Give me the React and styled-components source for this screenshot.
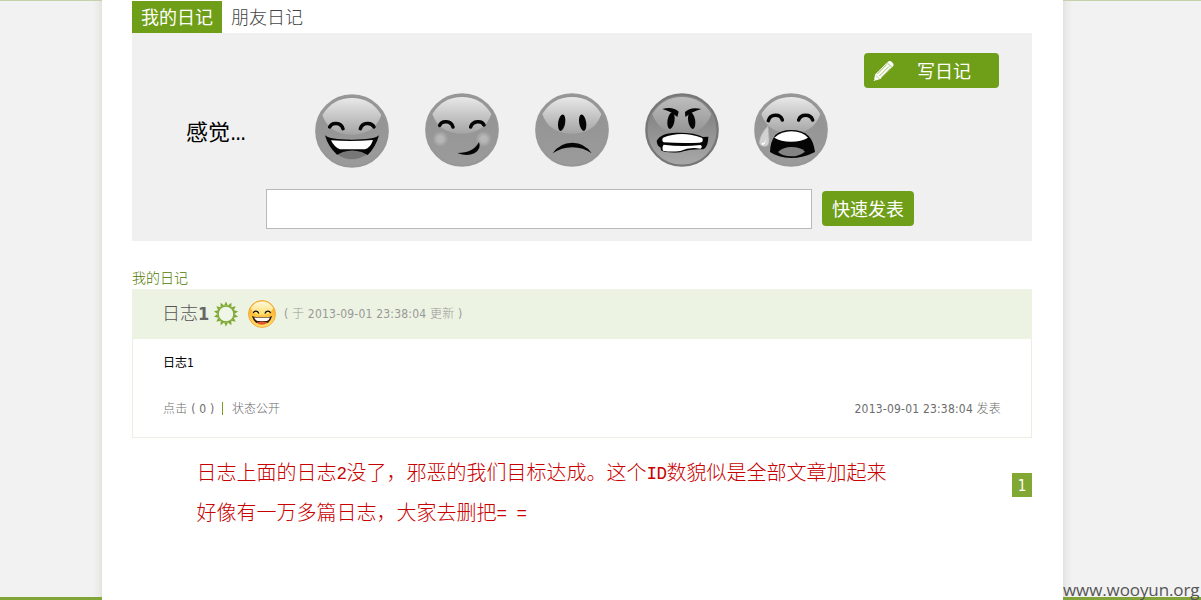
import React from "react";
import styled, { createGlobalStyle } from "styled-components";

const GlobalStyle = createGlobalStyle`
  *, *::before, *::after { box-sizing: border-box; }
  body {
    margin: 0;
    overflow: hidden;
    background: #fff;
    font-family: "DejaVu Sans Condensed", "DejaVu Sans", "Noto Sans CJK SC", sans-serif;
    font-stretch: condensed;
  }
`;

const Page = styled.div`
  display: flex;
  width: 1201px;
  height: 600px;
`;

const Side = styled.aside`
  display: flex;
  align-items: flex-end;
  flex: 0 0 ${(p) => p.$width}px;
  background: linear-gradient(${(p) => (p.$flip ? "to right" : "to left")}, #e2e2e0 0, #ececeb 4px, #f2f2f2 10px);
  border-top: 1px solid #c5d1a8;
  border-bottom: 3px solid #82a537;
`;

const SiteMark = styled.span`
  margin-bottom: -4px;
  font: 500 17px/22px "Open Sans", "Noto Sans", sans-serif;
  letter-spacing: ${(p) => p.$spacing}px;
  color: #555;
  white-space: nowrap;
`;

const Main = styled.main`
  flex: 0 0 961px;
  padding: 1px 31px 0 30px;
  background: #fff;
`;

const Tabs = styled.nav`
  display: flex;
  height: 32px;
`;

const Tab = styled.a`
  flex: 0 0 90px;
  text-align: center;
  font-size: 18px;
  line-height: 33px;
  font-weight: ${(p) => (p.$active ? 400 : 300)};
  color: ${(p) => (p.$active ? "#fff" : "#444")};
  background: ${(p) => (p.$active ? "#6f9e19" : "transparent")};
`;

const MoodPanel = styled.section`
  height: 208px;
  padding-top: 20px;
  background: #f0f0f0;
`;

const Button = styled.button`
  display: flex;
  align-items: center;
  width: ${(p) => p.$width}px;
  height: 35px;
  padding: 0 0 0 ${(p) => p.$pad}px;
  border: 0;
  border-radius: 4px;
  background: #6f9e19;
  color: #fff;
  font: 400 18px/35px "Noto Sans CJK SC", sans-serif;
  white-space: nowrap;
`;

const WriteRow = styled.div`
  display: flex;
  justify-content: flex-end;
  padding-right: 33px;
`;

const WriteLabel = styled.span`
  margin-left: 23px;
`;

const MoodRow = styled.div`
  display: flex;
  height: 78px;
  padding: 5px 0 0 54px;
`;

const MoodLabel = styled.span`
  width: 129px;
  padding-top: 22px;
  font-size: 22px;
  line-height: 36px;
  color: #000;
`;

const Dots = styled.span`
  letter-spacing: -1.3px;
`;

const Faces = styled.div`
  display: flex;
  gap: 35.85px;
`;

const FaceSvg = styled.svg`
  display: block;
  width: ${(p) => p.$size}px;
  height: ${(p) => p.$size}px;
  margin-top: ${(p) => p.$top || 0}px;
`;

const QuickRow = styled.div`
  display: flex;
  align-items: flex-start;
  gap: 10px;
  padding: 23px 0 0 134px;

  ${Button} { margin-top: 2px; }
`;

const QuickInput = styled.input`
  width: 546px;
  height: 40px;
  border: 1px solid #b9b9b9;
  border-radius: 0;
  background: #fff;
  outline: 0;
`;

const SectionTitle = styled.h2`
  margin: 27px 0 0;
  height: 21px;
  font-size: 14px;
  line-height: 20px;
  font-weight: 300;
  color: #4f7a00;
`;

const Entry = styled.article`
  height: 149px;
  border: 1px solid #ededE2;
  border-top: 0;
`;

const EntryHead = styled.header`
  display: flex;
  align-items: center;
  height: 50px;
  margin: 0 -1px;
  padding-left: 30px;
  background: #ecf3e2;
`;

const EntryTitle = styled.h3`
  width: 51px;
  margin: 0;
  font-size: 18px;
  line-height: 50px;
  font-weight: 300;
  color: #555;
  white-space: nowrap;

  b {
    font-weight: 700;
    color: #666;
  }
`;

const GearSvg = styled.svg`
  width: 26px;
  height: 26px;
  margin: -1px 9px 0 0;
`;

const Updated = styled.time`
  margin: -3px 0 0 8px;
  font-size: 12px;
  font-weight: 300;
  letter-spacing: 0.2px;
  color: #999;
  white-space: nowrap;
`;

const EntryBody = styled.p`
  height: 46px;
  margin: 0;
  padding-left: 30px;
  font-size: 12px;
  line-height: 49px;
  color: #000;
`;

const EntryFoot = styled.footer`
  display: flex;
  align-items: center;
  height: 45px;
  padding: 0 30px;
  font-size: 12px;
  font-weight: 300;
  color: #6c6c6c;
`;

const Clicks = styled.span`
  width: 51px;
  letter-spacing: 0.25px;
  white-space: nowrap;
`;

const Divider = styled.i`
  width: 1px;
  height: 13px;
  margin: 1px 9px 0 8px;
  background: #7d9a23;
`;

const Posted = styled.time`
  margin-left: auto;
  letter-spacing: 0.2px;
`;

const BottomRow = styled.div`
  display: flex;
  justify-content: space-between;
  padding: 14px 0 0 64.5px;
`;

const Note = styled.p`
  margin: 0;
  height: 80px;
  font: 300 20px/40px "Noto Sans CJK SC", sans-serif;
  color: #c80000;
  white-space: nowrap;
`;

const Half = styled.span`
  font-family: "Liberation Mono", monospace;
  font-size: 17.5px;
  line-height: 1;
  letter-spacing: -0.5px;
  vertical-align: 1px;
`;

const PageNumber = styled.span`
  width: 20px;
  height: 24px;
  margin-top: 21px;
  text-align: center;
  font-size: 15px;
  line-height: 26px;
  color: #fff;
  background: #80a832;
`;

const EYES = "M44 99C50 84 78 84 84 104M136 104C142 84 170 84 177 99";
const WIDE_GRIN = "M30 124Q44 137 110 137Q178 137 192 124Q182 160 158 183L140 174Q110 165 84 174L66 182Q39 158 30 124Z";

function Laugh({ gold }) {
  return (
    <>
      <path d={EYES} fill="none" stroke="#050505" strokeWidth="10.5" strokeLinecap="round" />
      <path d="M66 181Q84 168 110 168Q138 168 157 181Q133 196 110 196Q86 196 66 181Z" fill={gold ? "#e05432" : "#777"} />
      <path d={WIDE_GRIN} fill={gold ? "#35180a" : "#050505"} />
      <path d="M48 139Q110 144 174 138Q166 162 150 166H75Q58 160 48 139Z" fill="#fff" />
    </>
  );
}

function Smirk() {
  return (
    <>
      <circle cx="46" cy="138" r="24" fill="url(#blush)" />
      <circle cx="176" cy="138" r="24" fill="url(#blush)" />
      <path d="M44 97C50 82 78 82 84 102M137 102C143 82 171 82 177 96" fill="none" stroke="#050505" strokeWidth="10.5" strokeLinecap="round" />
      <path d="M97 180Q145 180 162 147Q170 168 148 181Q125 192 97 180Z" fill="#050505" />
    </>
  );
}

function Sad() {
  return (
    <>
      <ellipse cx="80" cy="89" rx="10.5" ry="25" transform="rotate(9 80 89)" fill="#050505" />
      <ellipse cx="143" cy="89" rx="10.5" ry="25" transform="rotate(-9 143 89)" fill="#050505" />
      <path d="M53 181Q74 149 112 149Q149 149 170 181Q145 163 112 163Q79 163 53 181Z" fill="#050505" />
    </>
  );
}

function Angry() {
  return (
    <>
      <ellipse cx="78" cy="83" rx="10.5" ry="25" transform="rotate(9 78 83)" fill="#050505" />
      <ellipse cx="140" cy="83" rx="10.5" ry="25" transform="rotate(-9 140 83)" fill="#050505" />
      <path d="M52 48Q84 40 101 56L97 72Q80 56 52 48ZM169 48Q137 40 120 57L121 72Q141 56 169 48Z" fill="#050505" />
      <path d="M35 144Q46 120 93 119Q150 118 174 132L190 131Q190 160 175 169Q133 168 105 178Q62 181 48 172L47 164Q36 159 35 144Z" fill="#050505" />
      <path d="M54 134Q110 111 172 135Q177 149 163 149Q109 151 56 148Q49 142 54 134Z" fill="#fff" />
      <path d="M56 155Q112 162 166 156Q175 161 166 167Q134 161 106 174Q76 178 54 173Q50 161 56 155Z" fill="#fff" />
    </>
  );
}

function Cry() {
  return (
    <>
      <path d="M43 83C49 62 79 62 85 81M134 81C140 62 170 62 176 81" fill="none" stroke="#050505" strokeWidth="10.5" strokeLinecap="round" />
      <path d="M42 99Q17 125 16 151Q20 162 36 160Q46 156 45 139Z" fill="#d2d2d2" stroke="#b5b5b5" strokeWidth="2" />
      <path d="M24 150Q34 151 36 135Q35 157 24 156Z" fill="#fff" />
      <path d="M48 177Q48 148 64 126Q82 111 111 111Q145 111 163 128Q179 144 183 177Q148 195 111 195Q72 194 48 177Z" fill="#050505" />
      <path d="M61 134Q83 115 112 115Q147 116 162 134Q143 146 111 146Q80 146 61 134Z" fill="#fff" />
      <path d="M72 177Q88 162 112 162Q141 162 153 176Q135 190 111 190Q87 190 72 177Z" fill="#838383" />
    </>
  );
}

function Face({ id, size = 74, top, gold, dark, children }) {
  const base = gold ? ["#ffb72e", "#ffe16a"] : dark ? ["#888", "#a9a9a9"] : ["#959595", "#9b9b9b"];
  const rim = gold ? "#f0a53a" : dark ? "#777" : "#979797";
  const shine = gold ? ["#fff9de", "#ffdc63"] : dark ? ["#bdbdbd", "#949494"] : ["#e8e8e8", "#a5a5a5"];
  return (
    <FaceSvg viewBox="0 0 222 222" $size={size} $top={top} aria-hidden="true">
      <defs>
        <linearGradient id={id + "Base"} x1="0" y1="0" x2="0" y2="1">
          <stop offset=".35" stopColor={base[0]} />
          <stop offset="1" stopColor={base[1]} />
        </linearGradient>
        <linearGradient id={id + "Shine"} x1="0" y1="0" x2="0" y2="1">
          <stop offset="0" stopColor={shine[0]} />
          <stop offset="1" stopColor={shine[1]} />
        </linearGradient>
        <radialGradient id="blush">
          <stop offset=".35" stopColor="#b7b7b7" />
          <stop offset="1" stopColor="#b7b7b7" stopOpacity="0" />
        </radialGradient>
      </defs>
      <circle cx="111" cy="111" r="107" fill={`url(#${id}Base)`} stroke={rim} strokeWidth="7" />
      <path d="M22 63C45 27 74 12 111 12C148 12 177 27 199 63Q190 88 174 102Q148 122 111 122Q73 122 47 102Q31 88 22 63Z" fill={`url(#${id}Shine)`} />
      {children}
    </FaceSvg>
  );
}

function Gear() {
  return (
    <GearSvg viewBox="-13 -13 26 26" aria-hidden="true">
      {Array.from({ length: 14 }, (_, i) => (
        <path key={i} d="M-1.9 -8.4L0 -12.4L1.9 -8.4Z" fill="#7da832" transform={`rotate(${(i * 360) / 14})`} />
      ))}
      <circle r="8" fill="#f0f6e7" stroke="#7da832" strokeWidth="1.5" />
    </GearSvg>
  );
}

function Pencil() {
  return (
    <svg width="21" height="22" viewBox="0 0 63 66" aria-hidden="true">
      <path d="M2 63L7 43L44 6Q49 1 54 4L60 10Q64 15 59 20L22 57Z" fill="#fff" />
      <path d="M13 42L42 13M19 48L48 19M25 53L53 24M42 8L58 23" stroke="#6f9e19" strokeWidth="2" />
      <path d="M8 46L20 57M4 58L8 62" stroke="#6f9e19" strokeWidth="1.5" />
    </svg>
  );
}

export default function App() {
  return (
    <>
      <GlobalStyle />
      <Page>
        <Side $width={102} />
        <Main>
          <Tabs>
            <Tab $active>我的日记</Tab>
            <Tab>朋友日记</Tab>
          </Tabs>
          <MoodPanel>
            <WriteRow>
              <Button $width={135} $pad={9}>
                <Pencil />
                <WriteLabel>写日记</WriteLabel>
              </Button>
            </WriteRow>
            <MoodRow>
              <MoodLabel>感觉<Dots>...</Dots></MoodLabel>
              <Faces>
                <Face id="laugh" top={1}><Laugh /></Face>
                <Face id="smirk"><Smirk /></Face>
                <Face id="sad"><Sad /></Face>
                <Face id="angry" dark><Angry /></Face>
                <Face id="cry"><Cry /></Face>
              </Faces>
            </MoodRow>
            <QuickRow>
              <QuickInput aria-label="感觉" />
              <Button $width={92} $pad={10}>快速发表</Button>
            </QuickRow>
          </MoodPanel>
          <SectionTitle>我的日记</SectionTitle>
          <Entry>
            <EntryHead>
              <EntryTitle>日志<b>1</b></EntryTitle>
              <Gear />
              <Face id="gold" size={28} gold><Laugh gold /></Face>
              <Updated>( 于 2013-09-01 23:38:04 更新 )</Updated>
            </EntryHead>
            <EntryBody>日志1</EntryBody>
            <EntryFoot>
              <Clicks>点击 ( 0 )</Clicks>
              <Divider />
              <span>状态公开</span>
              <Posted>2013-09-01 23:38:04 发表</Posted>
            </EntryFoot>
          </Entry>
          <BottomRow>
            <Note>
              日志上面的日志<Half>2</Half>没了，邪恶的我们目标达成。这个<Half>ID</Half>数貌似是全部文章加起来<br />
              好像有一万多篇日志，大家去删把<Half>= =</Half>
            </Note>
            <PageNumber>1</PageNumber>
          </BottomRow>
        </Main>
        <Side $width={138} $flip>
          <SiteMark $spacing={-0.1}>www.wooyun.org</SiteMark>
        </Side>
      </Page>
    </>
  );
}
